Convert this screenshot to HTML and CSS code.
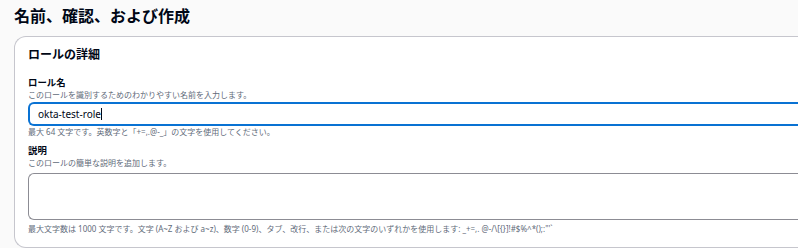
FILE: index.html
```html
<!DOCTYPE html>
<html lang="ja">
<head>
<meta charset="utf-8">
<link rel="stylesheet" href="styles.css">
</head>
<body>
<h1 class="page-title">名前、確認、および作成</h1>
<section class="card">
  <h2 class="card-title">ロールの詳細</h2>
  <div class="field field-first">
    <div class="label">ロール名</div>
    <div class="desc">このロールを識別するためのわかりやすい名前を入力します。</div>
    <div class="input focused">okta-test-role<span class="caret"></span></div>
    <div class="constraint">最大 64 文字です。英数字と「+=,.@-_」の文字を使用してください。</div>
  </div>
  <div class="field field-second">
    <div class="label">説明</div>
    <div class="desc">このロールの簡単な説明を追加します。</div>
    <div class="textarea"></div>
    <div class="constraint constraint-last">最大文字数は 1000 文字です。文字 (A~Z および a~z)、数字 (0-9)、タブ、改行、または次の文字のいずれかを使用します: _+=,. @-/\[{}]!#$%^*();:"'`</div>
  </div>
</section>
</body>
</html>
```
FILE: styles.css
```css
html, body {
  margin: 0;
  padding: 0;
}
body {
  background: #fafafa;
  font-family: "Noto Sans", "Noto Sans CJK JP", sans-serif;
  color: #000716;
  width: 798px;
  height: 248px;
  overflow: hidden;
}
.page-title {
  margin: 0 0 0 14px;
  font-size: 16px;
  line-height: 32px;
  font-weight: 700;
  height: 32px;
}
.card {
  margin: 4px 0 0 14px;
  width: 800px;
  background: #ffffff;
  border: 1px solid #c6c6cd;
  border-right: none;
  border-radius: 12px 0 0 12px;
  padding: 10px 0 12px 13px;
  box-sizing: border-box;
}
.card-title {
  margin: 0;
  font-size: 12px;
  line-height: 16px;
  font-weight: 700;
}
.field-first {
  margin-top: 14px;
}
.field-second {
  margin-top: 7px;
}
.label {
  font-size: 9.4px;
  line-height: 12px;
  font-weight: 700;
}
.desc {
  font-size: 8px;
  line-height: 12px;
  color: #5f6b7a;
}
.constraint {
  font-size: 8px;
  line-height: 12px;
  color: #5f6b7a;
}
.input {
  margin-top: 1px;
  height: 24px;
  box-sizing: border-box;
  border: 2px solid #0972d3;
  border-right: none;
  border-radius: 6px 0 0 6px;
  padding: 0 8px;
  font-size: 10px;
  line-height: 20px;
  display: flex;
  align-items: center;
  background: #fff;
}
.caret {
  display: inline-block;
  width: 1px;
  height: 12px;
  background: #000716;
}
.textarea {
  margin-top: 4px;
  height: 47px;
  box-sizing: border-box;
  border: 1px solid #8c8c94;
  border-right: none;
  border-radius: 6px 0 0 6px;
  background: #fff;
}
.constraint-last {
  margin-top: 3px;
}
```
